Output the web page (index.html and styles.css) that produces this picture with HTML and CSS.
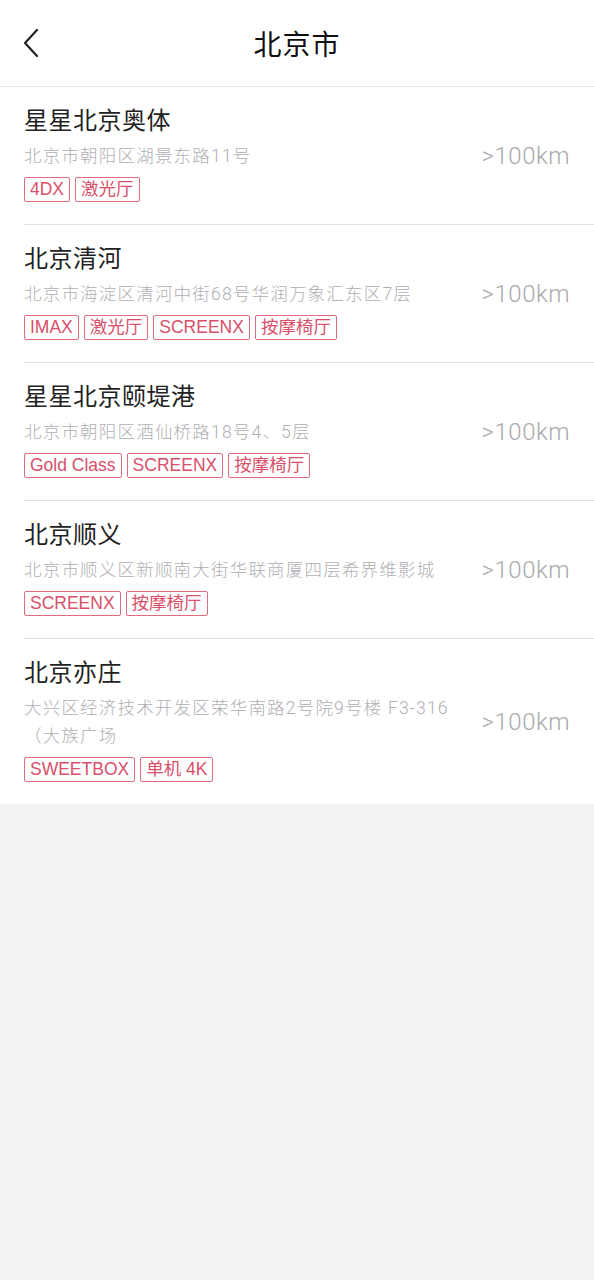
FILE: index.html
```html
<!DOCTYPE html>
<html lang="zh-CN">
<head>
  <meta charset="UTF-8" />
  <title>北京市</title>
  <link rel="stylesheet" href="styles.css">
</head>
<body>
  <div class="header">
    <a class="back" href="#">
      <svg width="18" height="30" viewBox="0 0 18 30">
        <polyline points="15,2 3,15 15,28" fill="none" stroke="#222" stroke-width="2.2" stroke-linecap="round" stroke-linejoin="round"/>
      </svg>
    </a>
    <div class="header-title">北京市</div>
  </div>

  <div class="list">
    <div class="cinema">
      <div class="cinema-body">
        <div class="info">
          <div class="name">星星北京奥体</div>
          <div class="address">北京市朝阳区湖景东路11号</div>
          <div class="tags">
            <span class="tag">4DX</span>
            <span class="tag">激光厅</span>
          </div>
        </div>
        <div class="distance">&gt;100km</div>
      </div>
    </div>

    <div class="cinema">
      <div class="cinema-body">
        <div class="info">
          <div class="name">北京清河</div>
          <div class="address">北京市海淀区清河中街68号华润万象汇东区7层</div>
          <div class="tags">
            <span class="tag">IMAX</span>
            <span class="tag">激光厅</span>
            <span class="tag">SCREENX</span>
            <span class="tag">按摩椅厅</span>
          </div>
        </div>
        <div class="distance">&gt;100km</div>
      </div>
    </div>

    <div class="cinema">
      <div class="cinema-body">
        <div class="info">
          <div class="name">星星北京颐堤港</div>
          <div class="address">北京市朝阳区酒仙桥路18号4、5层</div>
          <div class="tags">
            <span class="tag">Gold Class</span>
            <span class="tag">SCREENX</span>
            <span class="tag">按摩椅厅</span>
          </div>
        </div>
        <div class="distance">&gt;100km</div>
      </div>
    </div>

    <div class="cinema">
      <div class="cinema-body">
        <div class="info">
          <div class="name">北京顺义</div>
          <div class="address">北京市顺义区新顺南大街华联商厦四层希界维影城</div>
          <div class="tags">
            <span class="tag">SCREENX</span>
            <span class="tag">按摩椅厅</span>
          </div>
        </div>
        <div class="distance">&gt;100km</div>
      </div>
    </div>

    <div class="cinema">
      <div class="cinema-body">
        <div class="info">
          <div class="name">北京亦庄</div>
          <div class="address">大兴区经济技术开发区荣华南路2号院9号楼 F3-316（大族广场</div>
          <div class="tags">
            <span class="tag">SWEETBOX</span>
            <span class="tag">单机 4K</span>
          </div>
        </div>
        <div class="distance">&gt;100km</div>
      </div>
    </div>
  </div>
</body>
</html>
```

FILE: styles.css
```css
* {
  box-sizing: border-box;
}

body {
  margin: 0;
  padding: 0;
  min-height: 100vh;
  background: #f2f3f5;
  font-family: 'Liberation Sans', 'Noto Sans CJK SC', sans-serif;
  color: #222;
}

.header {
  display: flex;
  align-items: center;
  justify-content: center;
  position: relative;
  height: 87px;
  background: #fff;
  border-bottom: 1px solid #e6e6e6;
}

.back {
  position: absolute;
  left: 22px;
  top: 28px;
  display: flex;
}

.header-title {
  font-size: 28px;
  color: #111;
  letter-spacing: 1px;
}

.list {
  background: #fff;
}

.cinema {
  padding-left: 24px;
}

.cinema-body {
  display: flex;
  align-items: center;
  padding: 17px 24px 22px 0;
  border-bottom: 1px solid #e2e2e2;
}

.cinema:last-child .cinema-body {
  border-bottom: none;
}

.info {
  flex: 1;
  min-width: 0;
}

.name {
  font-size: 24px;
  line-height: 34px;
  letter-spacing: 0.5px;
  color: #222;
}

.address {
  margin-top: 4px;
  font-family: Roboto, 'Noto Sans CJK SC', sans-serif;
  font-size: 17.5px;
  font-weight: 300;
  line-height: 28px;
  letter-spacing: 1.2px;
  color: #afafb3;
}

.tags {
  display: flex;
  flex-wrap: wrap;
  gap: 5px;
  margin-top: 7px;
}

.tag {
  height: 25px;
  line-height: 23px;
  padding: 0 5px;
  font-size: 17.5px;
  color: #d9506a;
  border: 1px solid #e26a7e;
  border-radius: 2px;
}

.distance {
  width: 106px;
  padding-top: 5px;
  text-align: right;
  font-family: Roboto, 'Liberation Sans', sans-serif;
  font-weight: 300;
  font-size: 24px;
  letter-spacing: 0.5px;
  color: #a9a9ad;
}
```
